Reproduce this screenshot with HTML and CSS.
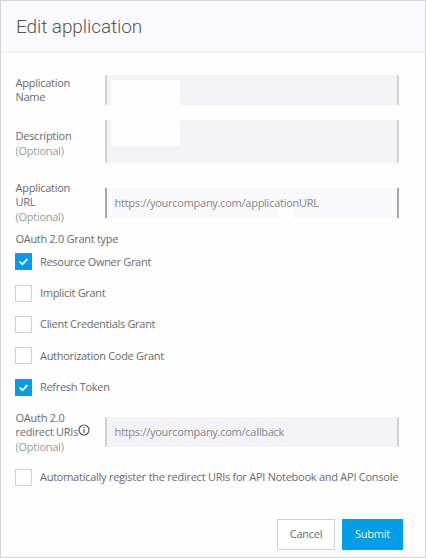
FILE: index.html
```html
<!DOCTYPE html>
<html lang="en">
<head>
<meta charset="utf-8">
<title>Edit application</title>
<link rel="stylesheet" href="styles.css">
</head>
<body>
<form class="dialog">
  <header class="header"><h1 class="title">Edit application</h1></header>
  <main class="content">
    <div class="row row-name">
      <div class="label">Application<br>Name</div>
      <div class="field"><span class="redaction"></span></div>
    </div>
    <div class="row row-description">
      <div class="label">Description<br><span class="optional">(Optional)</span></div>
      <div class="field"></div>
    </div>
    <div class="row row-url">
      <div class="label">Application<br>URL<br><span class="optional">(Optional)</span></div>
      <div class="field active"><span class="placeholder">https://yourcompany.com/applicationURL</span><span class="patch"></span></div>
    </div>
    <div class="group-title">OAuth 2.0 Grant type</div>
    <div class="checks">
      <div class="check"><span class="box checked"><svg viewBox="0 0 17 17"><path d="M4.6 8.6 7.5 11.2 12.4 6.2"/></svg></span><span>Resource Owner Grant</span></div>
      <div class="check"><span class="box"></span><span>Implicit Grant</span></div>
      <div class="check"><span class="box"></span><span>Client Credentials Grant</span></div>
      <div class="check"><span class="box"></span><span>Authorization Code Grant</span></div>
      <div class="check"><span class="box checked"><svg viewBox="0 0 17 17"><path d="M4.6 8.6 7.5 11.2 12.4 6.2"/></svg></span><span>Refresh Token</span></div>
    </div>
    <div class="row row-redirect">
      <div class="label">OAuth 2.0<br><span class="uris">redirect URIs<svg class="info" viewBox="0 0 12 12"><circle cx="6" cy="6" r="5"/><path d="M6 5.2V9M6 3V4.2"/></svg></span><br><span class="optional">(Optional)</span></div>
      <div class="field"><span class="placeholder">https://yourcompany.com/callback</span></div>
    </div>
    <div class="check auto"><span class="box"></span><span>Automatically register the redirect URIs for API Notebook and API Console</span></div>
  </main>
  <footer class="footer">
    <button type="button" class="button">Cancel</button>
    <button type="button" class="button primary">Submit</button>
  </footer>
</form>
</body>
</html>
```
FILE: styles.css
```css
* { box-sizing: border-box; }
body {
  margin: 0;
  background: #fefefe;
  color: #6b6b6d;
  font: 11px/14.3px "Open Sans", sans-serif;
  letter-spacing: -.26px;
}
.dialog {
  display: flex;
  flex-direction: column;
  width: 426px;
  height: 558px;
  border: 1px solid #d3d3d6;
}
.header {
  height: 52px;
  padding: 12px 15px 0;
  background: #fafafc;
  border-bottom: 2px solid #f1f1f4;
}
.title {
  margin: 0;
  font: 300 19px/27px Roboto, sans-serif;
  letter-spacing: -.08px;
  color: #555558;
}
.content { padding: 22px 26px 0 14px; }
.row {
  display: grid;
  grid-template-columns: 90px 294px;
  align-items: center;
}
.label { padding-left: .5px; white-space: nowrap; }
.optional { color: #9c9c9f; }
.field {
  position: relative;
  display: flex;
  align-items: center;
  height: 30px;
  padding-left: 7.5px;
  background: #f3f3f7;
  border: solid #d0d0d2;
  border-width: 0 2px;
}
.active { background: #f9f9fc; border-color: #a5a5a8; }
.active .placeholder { padding-top: 1px; }
.placeholder { color: #858587; white-space: nowrap; }
.row-name { height: 30px; }
.row-description { height: 43px; margin-top: 15px; }
.row-description .label { padding-top: 4px; }
.row-description .field { height: 43px; }
.row-url { height: 43px; margin-top: 18px; }
.row-url .label { padding-top: .2px; }
.row-redirect { height: 43px; margin-top: 15px; }
.redaction {
  position: absolute;
  z-index: 1;
  left: 4px;
  top: 5px;
  width: 69px;
  height: 66px;
  background: #fefefe;
}
.patch {
  position: absolute;
  left: 172px;
  top: 20px;
  width: 14px;
  height: 12px;
  background: #fefefe;
}
.group-title { margin-top: 8px; padding-left: .5px; letter-spacing: -.3px; }
.checks { display: grid; row-gap: 14.4px; margin-top: 7px; }
.check {
  display: flex;
  align-items: center;
  height: 17px;
  gap: 8px;
  white-space: nowrap;
}
.checks .check { letter-spacing: -.3px; }
.box { flex: none; width: 17px; height: 17px; border: 1px solid #d0d0d3; }
.checked { border: 0; background: #009ee5; }
.checked svg { display: block; fill: none; stroke: #fff; stroke-width: 1.8; }
.uris { display: inline-flex; align-items: center; height: 14px; }
.info {
  width: 12px;
  height: 12px;
  margin-top: -4px;
  fill: none;
  stroke: #555558;
  stroke-width: 1.2;
}
.auto { margin-top: 15px; }
.footer {
  display: flex;
  justify-content: flex-end;
  gap: 7px;
  margin: auto 22px 7px 0;
}
.button {
  width: 58px;
  height: 31px;
  padding: 0;
  border: 1px solid #d0d0d3;
  background: #fff;
  color: inherit;
  font: inherit;
  letter-spacing: inherit;
}
.primary { width: 61px; border: 0; background: #009ee5; color: #e4f6ff; font-weight: 500; letter-spacing: -.2px; }
```
